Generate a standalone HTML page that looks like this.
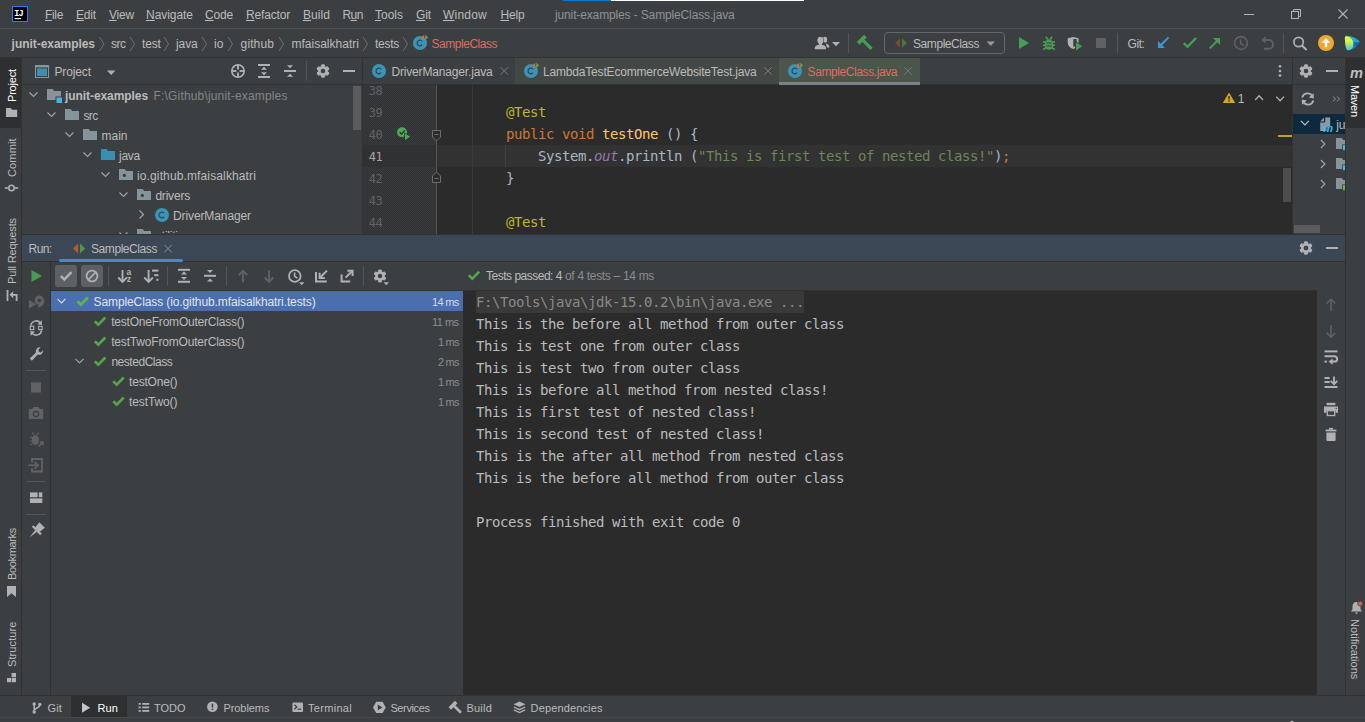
<!DOCTYPE html>
<html lang="en"><head><meta charset="utf-8"><title>junit-examples - SampleClass.java</title>
<style>
html,body{margin:0;padding:0;background:#3c3f41;}
body{width:1365px;height:722px;overflow:hidden;background:#3c3f41;position:relative;font-family:'Liberation Sans', sans-serif;}
#bg div,#ic svg,.t{position:absolute;}
.t{white-space:pre;}
.clip{position:absolute;overflow:hidden;}
.t u{text-decoration:underline;text-underline-offset:1px;text-decoration-thickness:1px;}
svg{overflow:visible;}
</style></head><body>
<div id="bg">
<div style="left:563px;top:0px;width:48px;height:1px;background:#0a78d7;"></div>
<div style="left:611px;top:0px;width:193px;height:1px;background:#ffffff;"></div>
<div style="left:0px;top:28px;width:1365px;height:1px;background:#515151;"></div>
<div style="left:0px;top:57px;width:1365px;height:1px;background:#323232;"></div>
<div style="left:0px;top:58px;width:21px;height:70px;background:#2d2f30;"></div>
<div style="left:21px;top:58px;width:1px;height:638px;background:#323232;"></div>
<div style="left:1345px;top:58px;width:1px;height:638px;background:#323232;"></div>
<div style="left:1346px;top:58px;width:19px;height:70px;background:#2d2f30;"></div>
<div style="left:22px;top:84px;width:340px;height:1px;background:#323232;"></div>
<div style="left:353px;top:86px;width:8px;height:44px;background:#595b5d;"></div>
<div style="left:362px;top:58px;width:1px;height:177px;background:#323232;"></div>
<div style="left:515px;top:58px;width:264px;height:26px;background:#434846;"></div>
<div style="left:779px;top:58px;width:141px;height:26px;background:#4b554b;"></div>
<div style="left:363px;top:84px;width:930px;height:1px;background:#303233;"></div>
<div style="left:779px;top:82px;width:141px;height:3px;background:#7b8086;"></div>
<div style="left:363px;top:85px;width:930px;height:149px;background:#2b2b2b;"></div>
<div style="left:363px;top:85px;width:73px;height:149px;background:#313335;background:repeating-conic-gradient(#2f3133 0 25%,#393b3e 0 50%) 0 0/2px 2px;"></div>
<div style="left:363px;top:145px;width:930px;height:22px;background:#323232;"></div>
<div style="left:363px;top:145px;width:73px;height:22px;background:#2f3133;"></div>
<div style="left:436px;top:85px;width:1px;height:149px;background:#555555;"></div>
<div style="left:472px;top:85px;width:1px;height:149px;background:#393939;"></div>
<div style="left:505px;top:145px;width:1px;height:22px;background:#404040;"></div>
<div style="left:1283px;top:168px;width:8px;height:34px;background:#4d4d4d;"></div>
<div style="left:1278px;top:135px;width:14px;height:2px;background:#c79d2a;"></div>
<div style="left:1292px;top:58px;width:1px;height:177px;background:#323232;"></div>
<div style="left:1293px;top:84px;width:52px;height:1px;background:#323232;"></div>
<div style="left:1293px;top:114px;width:52px;height:20px;background:#0d293e;"></div>
<div style="left:1294px;top:225px;width:26px;height:8px;background:#595b5d;"></div>
<div style="left:22px;top:234px;width:1323px;height:1px;background:#323232;"></div>
<div style="left:22px;top:235px;width:1323px;height:26px;background:#3b4754;"></div>
<div style="left:22px;top:261px;width:1323px;height:1px;background:#323232;"></div>
<div style="left:59px;top:259px;width:124px;height:3px;background:#4a88c7;border-radius:1.5px;"></div>
<div style="left:50px;top:262px;width:1px;height:434px;background:#323232;"></div>
<div style="left:51px;top:290px;width:1266px;height:1px;background:#323232;"></div>
<div style="left:51px;top:291px;width:412px;height:20px;background:#4b6eaf;"></div>
<div style="left:463px;top:291px;width:854px;height:404px;background:#2b2b2b;"></div>
<div style="left:476px;top:291px;width:328px;height:22px;background:#393939;"></div>
<div style="left:55px;top:265px;width:22px;height:22px;background:#5c6164;border-radius:3px;"></div>
<div style="left:81px;top:265px;width:22px;height:22px;background:#5c6164;border-radius:3px;"></div>
<div style="left:0px;top:695px;width:1365px;height:1px;background:#323232;"></div>
<div style="left:71px;top:696px;width:56px;height:21px;background:#2d2f30;"></div>
<div style="left:0px;top:717px;width:1365px;height:1px;background:#45484a;"></div>
</div>
<svg id="ic" width="1365" height="722" viewBox="0 0 1365 722" style="position:absolute;left:0;top:0">
<rect x="12" y="6" width="16" height="16" fill="#000000" />
<rect x="12.5" y="6.5" width="15" height="15" fill="none" stroke="#2a7df4" stroke-width="1"/>
<text x="14.3" y="15.6" font-family="'Liberation Mono', monospace" font-size="8.6" font-weight="bold" fill="#ffffff" letter-spacing="-0.9">IJ</text>
<rect x="14.6" y="18" width="6.4" height="1.2" fill="#ffffff" />
<line x1="1244" y1="14.5" x2="1254" y2="14.5" stroke="#b4b4b4" stroke-width="1" stroke-linecap="butt"/>
<rect x="1291.5" y="11.5" width="7" height="7" fill="none" stroke="#b4b4b4" stroke-width="1"/>
<path d="M1293.5 11.500v-2h7v7h-2" fill="none" stroke="#b4b4b4" stroke-width="1" />
<line x1="1338.5" y1="9.5" x2="1347.5" y2="18.5" stroke="#b4b4b4" stroke-width="1.1" stroke-linecap="butt"/>
<line x1="1347.5" y1="9.5" x2="1338.5" y2="18.5" stroke="#b4b4b4" stroke-width="1.1" stroke-linecap="butt"/>
<polyline points="99.5,37 104.0,44 99.5,51" fill="none" stroke="#6c6e70" stroke-width="1" stroke-linejoin="miter"/>
<polyline points="130,37 134.5,44 130,51" fill="none" stroke="#6c6e70" stroke-width="1" stroke-linejoin="miter"/>
<polyline points="164,37 168.5,44 164,51" fill="none" stroke="#6c6e70" stroke-width="1" stroke-linejoin="miter"/>
<polyline points="202,37 206.5,44 202,51" fill="none" stroke="#6c6e70" stroke-width="1" stroke-linejoin="miter"/>
<polyline points="228,37 232.5,44 228,51" fill="none" stroke="#6c6e70" stroke-width="1" stroke-linejoin="miter"/>
<polyline points="279,37 283.5,44 279,51" fill="none" stroke="#6c6e70" stroke-width="1" stroke-linejoin="miter"/>
<polyline points="363,37 367.5,44 363,51" fill="none" stroke="#6c6e70" stroke-width="1" stroke-linejoin="miter"/>
<polyline points="403,37 407.5,44 403,51" fill="none" stroke="#6c6e70" stroke-width="1" stroke-linejoin="miter"/>
<circle cx="420" cy="43" r="7.1" fill="#3d93b4" />
<path d="M422.1 41.3a2.8 2.8 0 1 0 0 3.4" fill="none" stroke="#2a4a62" stroke-width="1.2" />
<polygon points="421.3,37.4 424.2,34.8 424.2,40" fill="#e8672c" />
<polygon points="425.2,34.8 428.2,37.4 425.2,40" fill="#59a84a" />
<ellipse cx="824.900" cy="39.700" rx="2.300" ry="2.900" fill="#afb1b3"/>
<path d="M826 43.400c2 .500 3.300 1.500 3.300 3.200v.900h-2.600z" fill="#afb1b3" />
<g stroke="#3c3f41" stroke-width="1.200" paint-order="stroke"><ellipse cx="820.400" cy="40.500" rx="2.800" ry="3.400" fill="#afb1b3"/>
<path d="M814.800 49.200v-1.300c0-1.800 1.800-2.700 3.900-3.200h3.400c2.100 .500 3.900 1.400 3.900 3.200v1.300z" fill="#afb1b3" />
</g>
<ellipse cx="820.400" cy="40.500" rx="2.800" ry="3.400" fill="#afb1b3"/>
<rect x="819" y="43" width="2.8" height="2.4" fill="#afb1b3" />
<polygon points="832,42 840,42 836,46.2" fill="#afb1b3" />
<line x1="848.5" y1="33" x2="848.5" y2="53" stroke="#555555" stroke-width="1" stroke-linecap="butt"/>
<g transform="rotate(-45 862 40)"><rect x="856.800" y="37.800" width="10.400" height="3.800" fill="#499c54"/><rect x="860.800" y="41.400" width="3.300" height="11.600" fill="#499c54"/></g>
<rect x="884.5" y="32.5" width="120" height="21" rx="3.5" fill="none" stroke="#646668" stroke-width="1"/>
<polygon points="895,43 900,38.2 900,47.8" fill="#7a4a39" />
<polygon points="902,38.2 907,43 902,47.8" fill="#477548" />
<polygon points="986.6,41.5 995,41.5 990.8,45.8" fill="#9a9da0" />
<polygon points="1019,37 1029,43 1019,49" fill="#499c54" />
<g fill="#499c54">
<path d="M1046 36.800l1.800 2.600M1052 36.800l-1.800 2.600" stroke="#499c54" stroke-width="1.700" fill="none"/>
<rect x="1043" y="41.2" width="12" height="1.7" fill="#499c54" />
<rect x="1043" y="44.4" width="12" height="1.7" fill="#499c54" />
<path d="M1043.200 49.400l2.800-1.600M1054.800 49.400l-2.800-1.600" stroke="#499c54" stroke-width="1.700" fill="none"/>
<ellipse cx="1049" cy="44.500" rx="4.300" ry="5.300"/>
</g>
<rect x="1046.2" y="42.5" width="5.6" height="1" fill="#3c3f41" />
<rect x="1046.2" y="45.5" width="5.6" height="1" fill="#3c3f41" />
<path d="M1067.7 38.2l5.4-1.2 5.4 1.2v4.3c0 3.2-2.3 5.4-5.4 6.6-3.1-1.2-5.4-3.4-5.4-6.6z" fill="#afb1b3" />
<path d="M1073.3 39h3.4v3.5c0 2-1.3 3.7-3.4 4.7z" fill="#3c3f41" />
<polygon points="1075.5,41.5 1083.2,46.3 1075.5,51.2" fill="#499c54" stroke="#3c3f41" stroke-width="1"/>
<rect x="1096" y="38" width="10" height="10" fill="#5f6163" />
<line x1="1117.5" y1="33" x2="1117.5" y2="53" stroke="#555555" stroke-width="1" stroke-linecap="butt"/>
<line x1="1168.6" y1="37.4" x2="1161" y2="45" stroke="#3a97d0" stroke-width="2" stroke-linecap="butt"/>
<polygon points="1158,41 1158,48 1165,48" fill="#3a97d0" />
<polyline points="1183.8,43.2 1187.6,46.8 1196,38" fill="none" stroke="#499c54" stroke-width="2.4" stroke-linejoin="miter"/>
<line x1="1209.8" y1="48.4" x2="1217.4" y2="40.8" stroke="#499c54" stroke-width="2" stroke-linecap="butt"/>
<polygon points="1213,38 1220,38 1220,45" fill="#499c54" />
<circle cx="1241" cy="43" r="6.4" fill="none" stroke="#5f6163" stroke-width="1.6" />
<polyline points="1240.6,39.4 1240.6,43.4 1243.6,45.4" fill="none" stroke="#5f6163" stroke-width="1.5" stroke-linejoin="miter"/>
<polygon points="1261,40 1265.5,36.2 1265.5,43.8" fill="#5f6163" />
<path d="M1265 40h3.6a4.4 4.4 0 0 1 0 8.8h-4.6" fill="none" stroke="#5f6163" stroke-width="1.9" />
<line x1="1283.5" y1="33" x2="1283.5" y2="53" stroke="#555555" stroke-width="1" stroke-linecap="butt"/>
<circle cx="1298.6" cy="42" r="4.7" fill="none" stroke="#afb1b3" stroke-width="1.7" />
<line x1="1302" y1="45.5" x2="1306.6" y2="50" stroke="#afb1b3" stroke-width="2" stroke-linecap="butt"/>
<circle cx="1326" cy="43" r="8" fill="#f0a732" />
<polygon points="1321.6,42.8 1326,38.2 1330.4,42.8" fill="#ffffff" />
<rect x="1324.8" y="42" width="2.4" height="5.2" fill="#ffffff" />
<defs><clipPath id="cs"><path d="M1346.800 35.800c-1.200-.100-1.900.600-1.900 1.700 0 3.600.300 7.200 1.200 10.700.400 1.500 1.300 2.300 2.800 2 4.800-1 8.600-4 10.400-7.600.300-.700.300-1.200-.300-1.800-3.200-3.200-7.600-4.700-12.200-5z"/></clipPath><linearGradient id="csg" x1="0" y1="0" x2="0" y2="1"><stop offset="0" stop-color="#f6f236"/><stop offset=".28" stop-color="#e4ee4c"/><stop offset=".6" stop-color="#8fe07e"/><stop offset="1" stop-color="#2fc0e0"/></linearGradient><linearGradient id="csh" x1="0" y1="0" x2="1" y2="0"><stop offset="0" stop-color="#36cf84"/><stop offset=".5" stop-color="#22b3b4"/><stop offset="1" stop-color="#1593e0"/></linearGradient></defs>
<g clip-path="url(#cs)"><rect x="1344" y="35" width="17" height="17" fill="#1366c6"/><polygon points="1344,35 1361,35 1361,42.200 1352,42.200 1344,44" fill="url(#csh)"/><polygon points="1346,52 1350.500,46.500 1356.500,46 1352,52" fill="#1583de"/><ellipse cx="1346.300" cy="44" rx="7.200" ry="7.400" fill="url(#csg)"/></g>
<rect x="35.5" y="65.5" width="13" height="12" fill="none" stroke="#8a959c" stroke-width="1"/>
<rect x="35" y="65" width="14" height="2.4" fill="#8a959c" />
<rect x="37" y="68.4" width="10" height="7.6" fill="#3e8eaf" />
<polygon points="107,70.5 115.4,70.5 111.2,75" fill="#afb1b3" />
<circle cx="238" cy="71" r="6.2" fill="none" stroke="#afb1b3" stroke-width="1.6" />
<line x1="238" y1="64.7" x2="238" y2="69.4" stroke="#afb1b3" stroke-width="1.9" transform="rotate(0 238 71)"/>
<line x1="238" y1="64.7" x2="238" y2="69.4" stroke="#afb1b3" stroke-width="1.9" transform="rotate(90 238 71)"/>
<line x1="238" y1="64.7" x2="238" y2="69.4" stroke="#afb1b3" stroke-width="1.9" transform="rotate(180 238 71)"/>
<line x1="238" y1="64.7" x2="238" y2="69.4" stroke="#afb1b3" stroke-width="1.9" transform="rotate(270 238 71)"/>
<rect x="258" y="64" width="12" height="2" fill="#afb1b3" />
<rect x="258" y="76" width="12" height="2" fill="#afb1b3" />
<polygon points="264,66.8 267,69.8 261,69.8" fill="#afb1b3" />
<polygon points="261,72.2 267,72.2 264,75.2" fill="#afb1b3" />
<rect x="284" y="70" width="12" height="2" fill="#afb1b3" />
<polygon points="287,65.2 293,65.2 290,68.3" fill="#afb1b3" />
<polygon points="290,73.7 293,76.8 287,76.8" fill="#afb1b3" />
<line x1="306.5" y1="61" x2="306.5" y2="80.5" stroke="#555555" stroke-width="1" stroke-linecap="butt"/>
<path d="M321.34 66.60 L321.69 64.84 L324.31 64.84 L324.66 66.60 L325.98 67.37 L327.68 66.78 L328.99 69.06 L327.64 70.23 L327.64 71.77 L328.99 72.94 L327.68 75.22 L325.98 74.63 L324.66 75.40 L324.31 77.16 L321.69 77.16 L321.34 75.40 L320.02 74.63 L318.32 75.22 L317.01 72.94 L318.36 71.77 L318.36 70.23 L317.01 69.06 L318.32 66.78 L320.02 67.37Z" fill="#afb1b3" stroke="#afb1b3" stroke-width="1" stroke-linejoin="round"/>
<circle cx="323" cy="71" r="2.3" fill="#3c3f41" />
<rect x="343" y="70" width="12" height="2" fill="#afb1b3" />
<polyline points="29.5,92.5 33.5,96.5 37.5,92.5" fill="none" stroke="#a0a3a5" stroke-width="1.2" stroke-linejoin="miter"/>
<path d="M47 89h5.6l1.6 2h6.8v9h-14z" fill="#87939a" />
<polyline points="47.5,112.5 51.5,116.5 55.5,112.5" fill="none" stroke="#a0a3a5" stroke-width="1.2" stroke-linejoin="miter"/>
<path d="M65 109h5.6l1.6 2h6.8v9h-14z" fill="#87939a" />
<polyline points="65.5,132.5 69.5,136.5 73.5,132.5" fill="none" stroke="#a0a3a5" stroke-width="1.2" stroke-linejoin="miter"/>
<path d="M83 129h5.6l1.6 2h6.8v9h-14z" fill="#87939a" />
<polyline points="83.5,152.5 87.5,156.5 91.5,152.5" fill="none" stroke="#a0a3a5" stroke-width="1.2" stroke-linejoin="miter"/>
<path d="M101 149h5.6l1.6 2h6.8v9h-14z" fill="#3a8eb1" />
<polyline points="101.5,172.5 105.5,176.5 109.5,172.5" fill="none" stroke="#a0a3a5" stroke-width="1.2" stroke-linejoin="miter"/>
<path d="M119 169h5.6l1.6 2h6.8v9h-14z" fill="#87939a" />
<circle cx="124.3" cy="175.4" r="1.7" fill="#3c3f41" />
<polyline points="119.5,192.5 123.5,196.5 127.5,192.5" fill="none" stroke="#a0a3a5" stroke-width="1.2" stroke-linejoin="miter"/>
<path d="M137 189h5.6l1.6 2h6.8v9h-14z" fill="#87939a" />
<circle cx="142.3" cy="195.4" r="1.7" fill="#3c3f41" />
<rect x="55.5" y="96.5" width="7" height="7" fill="#3c3f41" />
<rect x="56.5" y="97.5" width="5.5" height="5.5" fill="#40b6e0" />
<polyline points="139.5,210.5 143.5,214.5 139.5,218.5" fill="none" stroke="#a0a3a5" stroke-width="1.2" stroke-linejoin="miter"/>
<circle cx="162" cy="215" r="7" fill="#3d93b4" />
<path d="M164.1 213.3a2.8 2.8 0 1 0 0 3.4" fill="none" stroke="#2a4a62" stroke-width="1.2" />
<g clip-path="url(#cliptree)">
<defs><clipPath id="cliptree"><rect x="22" y="85" width="340" height="149"/></clipPath></defs>
<polyline points="119.5,232.5 123.5,236.5 127.5,232.5" fill="none" stroke="#a0a3a5" stroke-width="1.2" stroke-linejoin="miter"/>
<path d="M137 229h5.6l1.6 2h6.8v9h-14z" fill="#87939a" />
<circle cx="142.3" cy="235.4" r="1.7" fill="#3c3f41" />
</g>
<path d="M6 108h4.6l1.6 1.8h5v7.2h-11.2z" fill="#afb1b3" />
<circle cx="11.5" cy="188" r="2.7" fill="none" stroke="#afb1b3" stroke-width="1.6" />
<rect x="4.8" y="187.2" width="4" height="1.6" fill="#afb1b3" />
<rect x="14.2" y="187.2" width="4" height="1.6" fill="#afb1b3" />
<rect x="6.6" y="290" width="1.8" height="11" fill="#afb1b3" />
<path d="M16.6 301v-6.2h-5.4" fill="none" stroke="#afb1b3" stroke-width="1.8" />
<polygon points="9.4,294.8 13.2,291.3 13.2,298.3" fill="#afb1b3" />
<path d="M7 586h9v11l-4.5-3.8-4.500 3.800z" fill="#afb1b3" />
<rect x="11.6" y="673" width="4.4" height="4.2" fill="#afb1b3" />
<rect x="7" y="678" width="4.2" height="4.2" fill="#afb1b3" />
<rect x="11.8" y="678" width="4.2" height="4.2" fill="#afb1b3" />
<text x="1350" y="78" font-family="'Liberation Sans', sans-serif" font-size="14" font-weight="bold" fill="#bfbfbf" font-style="italic" textLength="13" lengthAdjust="spacingAndGlyphs">m</text>
<path d="M1356.500 602c2.600 0 4 2 4 4.300v3l1.500 2.200h-11l1.500-2.200v-3c0-2.300 1.400-4.300 4-4.300z" fill="#afb1b3" />
<polygon points="1354.8,612.4 1358.2,612.4 1356.5,614.2" fill="#afb1b3" />
<circle cx="1360.2" cy="603.6" r="2.5" fill="#db5c50" stroke="#3c3f41" stroke-width="0.8"/>
<circle cx="379" cy="71" r="7" fill="#3d93b4" />
<path d="M381.1 69.3a2.8 2.8 0 1 0 0 3.4" fill="none" stroke="#2a4a62" stroke-width="1.2" />
<circle cx="531" cy="71" r="7" fill="#3d93b4" />
<path d="M533.1 69.3a2.8 2.8 0 1 0 0 3.4" fill="none" stroke="#2a4a62" stroke-width="1.2" />
<polygon points="532.3,65.4 535.2,62.8 535.2,68" fill="#e8672c" />
<polygon points="536.2,62.8 539.2,65.4 536.2,68" fill="#59a84a" />
<circle cx="795" cy="71" r="7" fill="#3d93b4" />
<path d="M797.1 69.3a2.8 2.8 0 1 0 0 3.4" fill="none" stroke="#2a4a62" stroke-width="1.2" />
<polygon points="796.3,65.4 799.2,62.8 799.2,68" fill="#e8672c" />
<polygon points="800.2,62.8 803.2,65.4 800.2,68" fill="#59a84a" />
<line x1="500.5" y1="67.2" x2="508.0" y2="74.7" stroke="#787a7c" stroke-width="1" stroke-linecap="butt"/>
<line x1="508.0" y1="67.2" x2="500.5" y2="74.7" stroke="#787a7c" stroke-width="1" stroke-linecap="butt"/>
<line x1="764.3" y1="67.2" x2="771.8" y2="74.7" stroke="#787a7c" stroke-width="1" stroke-linecap="butt"/>
<line x1="771.8" y1="67.2" x2="764.3" y2="74.7" stroke="#787a7c" stroke-width="1" stroke-linecap="butt"/>
<line x1="904.3" y1="67.2" x2="911.8" y2="74.7" stroke="#787a7c" stroke-width="1" stroke-linecap="butt"/>
<line x1="911.8" y1="67.2" x2="904.3" y2="74.7" stroke="#787a7c" stroke-width="1" stroke-linecap="butt"/>
<circle cx="1280" cy="66.3" r="1.35" fill="#afb1b3" />
<circle cx="1280" cy="71" r="1.35" fill="#afb1b3" />
<circle cx="1280" cy="75.6" r="1.35" fill="#afb1b3" />
<circle cx="402" cy="132.2" r="5" fill="#4fa758" />
<polyline points="399.6,132.2 401.5,134 404.8,130.4" fill="none" stroke="#313335" stroke-width="1.3" stroke-linejoin="miter"/>
<polygon points="404.2,132.4 411,136.8 404.2,141.2" fill="#313335" />
<polygon points="405,133.6 410.2,136.8 405,140" fill="#4fa758" />
<path d="M432.500 130.500h8v6.500l-4 4-4-4z" fill="#2b2b2b" stroke="#6a6d70" stroke-width="1" />
<line x1="434.3" y1="134.5" x2="438.7" y2="134.5" stroke="#6a6d70" stroke-width="1" stroke-linecap="butt"/>
<path d="M432.500 182.500h8v-6.500l-4-4-4 4z" fill="#2b2b2b" stroke="#6a6d70" stroke-width="1" />
<line x1="434.3" y1="178.5" x2="438.7" y2="178.5" stroke="#6a6d70" stroke-width="1" stroke-linecap="butt"/>
<path d="M1229 92.400l6.200 10.600h-12.400z" fill="#d6a524" />
<rect x="1228.3" y="96" width="1.4" height="3.6" fill="#2b2b2b" />
<rect x="1228.3" y="100.3" width="1.4" height="1.4" fill="#2b2b2b" />
<polyline points="1255.2,100 1259.1,95.8 1263,100" fill="none" stroke="#afb1b3" stroke-width="1.3" stroke-linejoin="miter"/>
<polyline points="1276.2,96.6 1280.1,100.8 1284,96.6" fill="none" stroke="#afb1b3" stroke-width="1.3" stroke-linejoin="miter"/>
<path d="M1304.34 66.60 L1304.69 64.84 L1307.31 64.84 L1307.66 66.60 L1308.98 67.37 L1310.68 66.78 L1311.99 69.06 L1310.64 70.23 L1310.64 71.77 L1311.99 72.94 L1310.68 75.22 L1308.98 74.63 L1307.66 75.40 L1307.31 77.16 L1304.69 77.16 L1304.34 75.40 L1303.02 74.63 L1301.32 75.22 L1300.01 72.94 L1301.36 71.77 L1301.36 70.23 L1300.01 69.06 L1301.32 66.78 L1303.02 67.37Z" fill="#afb1b3" stroke="#afb1b3" stroke-width="1" stroke-linejoin="round"/>
<circle cx="1306" cy="71" r="2.3" fill="#3c3f41" />
<rect x="1326" y="70" width="12" height="2" fill="#afb1b3" />
<path d="M1302.200 97.500a5.700 5.700 0 0 1 10.200-1.600" fill="none" stroke="#afb1b3" stroke-width="1.8" />
<polygon points="1313.6,93.2 1313.8,98.4 1308.8,97.6" fill="#afb1b3" />
<path d="M1313.400 100.500a5.700 5.700 0 0 1-10.200 1.600" fill="none" stroke="#afb1b3" stroke-width="1.8" />
<polygon points="1302,104.8 1301.8,99.6 1306.8,100.4" fill="#afb1b3" />
<polyline points="1332.8,96.4 1335.6,98.8 1332.8,101.2" fill="none" stroke="#8a8d8f" stroke-width="1" stroke-linejoin="miter"/>
<polyline points="1336.8,96.4 1339.6,98.8 1336.8,101.2" fill="none" stroke="#8a8d8f" stroke-width="1" stroke-linejoin="miter"/>
<polyline points="1300.9,120.9 1304.9,124.9 1308.9,120.9" fill="none" stroke="#c0c4c8" stroke-width="1.2" stroke-linejoin="miter"/>
<g clip-path="url(#clipmvn)"><defs><clipPath id="clipmvn"><rect x="1293" y="85" width="52" height="149"/></clipPath></defs>
<path d="M1325.200 117.400h5v9.200h-3.600v4.400h-6.400v-8.400h5z" fill="#8e9aa3" />
<polygon points="1320.2,121.4 1324,117.6 1324,121.4" fill="#8e9aa3" />
<text x="1323.2" y="132" font-family="'Liberation Sans', sans-serif" font-size="11" font-weight="bold" fill="#40b6e0" font-style="italic">m</text>
<polyline points="1320.9,140.0 1324.9,144.0 1320.9,148.0" fill="none" stroke="#a0a3a5" stroke-width="1.2" stroke-linejoin="miter"/>
<path d="M1336 138h5.6l1.6 2h6.8v9h-14z" fill="#87939a" />
<rect x="1342.2" y="144.4" width="4" height="6" fill="#3c3f41" />
<rect x="1343" y="145.2" width="3" height="5" fill="#40b6e0" />
<polyline points="1320.9,160.0 1324.9,164.0 1320.9,168.0" fill="none" stroke="#a0a3a5" stroke-width="1.2" stroke-linejoin="miter"/>
<path d="M1336 158h5.6l1.6 2h6.8v9h-14z" fill="#87939a" />
<rect x="1342.2" y="164.4" width="4" height="6" fill="#3c3f41" />
<rect x="1343" y="165.2" width="3" height="5" fill="#40b6e0" />
<polyline points="1320.9,180.0 1324.9,184.0 1320.9,188.0" fill="none" stroke="#a0a3a5" stroke-width="1.2" stroke-linejoin="miter"/>
<path d="M1336 178h5.6l1.6 2h6.8v9h-14z" fill="#87939a" />
<rect x="1342.2" y="184.4" width="4" height="6" fill="#3c3f41" />
<rect x="1343" y="185.2" width="3" height="5" fill="#62b543" />
</g>
<polygon points="73,248.6 78.2,243.6 78.2,253.6" fill="#b65c30" />
<polygon points="80,243.6 85.2,248.6 80,253.6" fill="#4f9848" />
<line x1="164.3" y1="244.8" x2="171.8" y2="252.3" stroke="#8a9099" stroke-width="1" stroke-linecap="butt"/>
<line x1="171.8" y1="244.8" x2="164.3" y2="252.3" stroke="#8a9099" stroke-width="1" stroke-linecap="butt"/>
<path d="M1304.34 243.60 L1304.69 241.84 L1307.31 241.84 L1307.66 243.60 L1308.98 244.37 L1310.68 243.78 L1311.99 246.06 L1310.64 247.23 L1310.64 248.77 L1311.99 249.94 L1310.68 252.22 L1308.98 251.63 L1307.66 252.40 L1307.31 254.16 L1304.69 254.16 L1304.34 252.40 L1303.02 251.63 L1301.32 252.22 L1300.01 249.94 L1301.36 248.77 L1301.36 247.23 L1300.01 246.06 L1301.32 243.78 L1303.02 244.37Z" fill="#afb1b3" stroke="#afb1b3" stroke-width="1" stroke-linejoin="round"/>
<circle cx="1306" cy="248" r="2.3" fill="#3c3f41" />
<circle cx="1306" cy="248" r="2.3" fill="#3b4754" />
<rect x="1326" y="247" width="12" height="2" fill="#afb1b3" />
<polygon points="31.5,270 42,276 31.5,282" fill="#499c54" />
<polygon points="29,300 36.5,304.3 29,308.6" fill="#606264" />
<circle cx="39.3" cy="300.3" r="3.3" fill="none" stroke="#606264" stroke-width="2.8" />
<path d="M43.2 300.5c0 3-1.600 5-5 5.800" fill="none" stroke="#606264" stroke-width="2.4" />
<path d="M30.800 325.500a5.600 5.600 0 0 1 9.600-2.800" fill="none" stroke="#afb1b3" stroke-width="1.5" />
<polygon points="41.8,320.2 42,325 37.4,324.2" fill="#afb1b3" />
<path d="M41.600 330.500a5.600 5.600 0 0 1-9.600 2.800" fill="none" stroke="#afb1b3" stroke-width="1.5" />
<polygon points="30.6,335.8 30.4,331 35,331.8" fill="#afb1b3" />
<rect x="30.300" y="326.300" width="3.400" height="3.400" fill="none" stroke="#afb1b3" stroke-width="1.100"/><rect x="38.700" y="326.300" width="3.400" height="3.400" fill="none" stroke="#afb1b3" stroke-width="1.100"/>
<path d="M43.300 350.200a4.300 4.300 0 0 1-5.600 4.400l-5.800 6.200-2.200-2.200 6.200-5.800a4.300 4.300 0 0 1 4.800-5.500l-2.400 2.500 .600 2 2 .600z" fill="#afb1b3" />
<line x1="26.5" y1="370.5" x2="45.5" y2="370.5" stroke="#555555" stroke-width="1" stroke-linecap="butt"/>
<rect x="31" y="382.5" width="10" height="10" fill="#606264" />
<path d="M33.500 407l-1.300 2h-2.400a1 1 0 0 0-1 1v8a1 1 0 0 0 1 1h12.400a1 1 0 0 0 1-1v-8a1 1 0 0 0-1-1h-2.400l-1.300-2z" fill="#606264" />
<circle cx="36" cy="414" r="2.6" fill="none" stroke="#3c3f41" stroke-width="1.3" />
<g fill="#606264" stroke="#606264">
<ellipse cx="35.500" cy="440" rx="3.600" ry="4.800" stroke="none"/><path d="M32.200 432.600l2 2.400M38.800 432.600l-2 2.400M30 437.500h3M30 441h3M30.300 445l2.400-1.200" stroke-width="1.200" fill="none"/></g>
<polygon points="38,441 44,441 44,447" fill="#606264" stroke="#3c3f41" stroke-width="0.800"/>
<line x1="43.2" y1="441.8" x2="38.5" y2="446.5" stroke="#606264" stroke-width="1.6" stroke-linecap="butt"/>
<path d="M32 462.400v-3.400h10v12.500h-10v-3.400" fill="none" stroke="#606264" stroke-width="1.8" />
<line x1="28.6" y1="465.2" x2="37.5" y2="465.2" stroke="#606264" stroke-width="1.8" stroke-linecap="butt"/>
<polyline points="34.6,461.8 38,465.2 34.6,468.6" fill="none" stroke="#606264" stroke-width="1.8" stroke-linejoin="miter"/>
<line x1="26.5" y1="481.5" x2="45.5" y2="481.5" stroke="#555555" stroke-width="1" stroke-linecap="butt"/>
<rect x="30" y="492.4" width="7.6" height="4.8" fill="#afb1b3" />
<rect x="38.8" y="492.4" width="3.5" height="4.8" fill="#afb1b3" />
<rect x="30" y="498.4" width="12.3" height="4.6" fill="#afb1b3" />
<line x1="26.5" y1="514.5" x2="45.5" y2="514.5" stroke="#555555" stroke-width="1" stroke-linecap="butt"/>
<g transform="rotate(45 36.5 530.5)" fill="#afb1b3"><path d="M32.600 522.600h7.800l-.800 6.800h-6.200z"/><rect x="30.600" y="529" width="11.800" height="2.200"/><path d="M35.300 531h2.400l-1.200 9.500z"/></g>
<polyline points="60.86,275.988 64.358,279.38 71.46,272.17199999999997" fill="none" stroke="#afb1b3" stroke-width="2.5" stroke-linejoin="miter"/>
<circle cx="92" cy="276" r="5.4" fill="none" stroke="#afb1b3" stroke-width="1.8" />
<line x1="88.2" y1="279.8" x2="95.8" y2="272.2" stroke="#afb1b3" stroke-width="1.8" stroke-linecap="butt"/>
<line x1="108.5" y1="266" x2="108.5" y2="286" stroke="#555555" stroke-width="1" stroke-linecap="butt"/>
<line x1="122.5" y1="270" x2="122.5" y2="281.4" stroke="#afb1b3" stroke-width="1.9" stroke-linecap="butt"/>
<polyline points="118.2,277.5 122.5,281.8 126.8,277.5" fill="none" stroke="#afb1b3" stroke-width="1.9" stroke-linejoin="miter"/>
<text x="126.6" y="274.7" font-family="'Liberation Sans', sans-serif" font-size="8.6" font-weight="bold" fill="#afb1b3" >a</text>
<text x="126.8" y="281.7" font-family="'Liberation Sans', sans-serif" font-size="8.6" font-weight="bold" fill="#afb1b3" >z</text>
<line x1="148.6" y1="270" x2="148.6" y2="281.4" stroke="#afb1b3" stroke-width="1.9" stroke-linecap="butt"/>
<polyline points="144.29999999999998,277.5 148.6,281.8 152.9,277.5" fill="none" stroke="#afb1b3" stroke-width="1.9" stroke-linejoin="miter"/>
<rect x="152" y="269.6" width="6.4" height="2" fill="#afb1b3" />
<rect x="154.2" y="274.2" width="4.2" height="2" fill="#afb1b3" />
<rect x="156.4" y="278.8" width="2" height="2" fill="#afb1b3" />
<line x1="167.5" y1="266" x2="167.5" y2="286" stroke="#555555" stroke-width="1" stroke-linecap="butt"/>
<rect x="178" y="268.8" width="12" height="2" fill="#afb1b3" />
<rect x="178" y="280.8" width="12" height="2" fill="#afb1b3" />
<polygon points="184,271.6 187,274.6 181,274.6" fill="#afb1b3" />
<polygon points="181,277.0 187,277.0 184,280.0" fill="#afb1b3" />
<rect x="204" y="274.8" width="12" height="2" fill="#afb1b3" />
<polygon points="207,270.0 213,270.0 210,273.1" fill="#afb1b3" />
<polygon points="210,278.5 213,281.6 207,281.6" fill="#afb1b3" />
<line x1="226.5" y1="266" x2="226.5" y2="286" stroke="#555555" stroke-width="1" stroke-linecap="butt"/>
<line x1="243" y1="271.3" x2="243" y2="282.2" stroke="#606264" stroke-width="1.9" stroke-linecap="butt"/>
<polyline points="238.7,275.2 243,270.9 247.3,275.2" fill="none" stroke="#606264" stroke-width="1.9" stroke-linejoin="miter"/>
<line x1="269" y1="270.5" x2="269" y2="281.4" stroke="#606264" stroke-width="1.9" stroke-linecap="butt"/>
<polyline points="264.7,277.5 269,281.8 273.3,277.5" fill="none" stroke="#606264" stroke-width="1.9" stroke-linejoin="miter"/>
<circle cx="294.8" cy="276" r="5.8" fill="none" stroke="#afb1b3" stroke-width="1.8" />
<polyline points="294.6,272.6 294.6,276.4 297.4,278.2" fill="none" stroke="#afb1b3" stroke-width="1.6" stroke-linejoin="miter"/>
<polygon points="298,281.4 305.4,281.4 301.7,286" fill="#3c3f41" />
<polygon points="299,282.2 304.4,282.2 301.7,285.2" fill="#afb1b3" />
<path d="M316 272v9.600h10.800" fill="none" stroke="#afb1b3" stroke-width="2" />
<line x1="327" y1="270.6" x2="320.6" y2="277" stroke="#afb1b3" stroke-width="2" stroke-linecap="butt"/>
<path d="M319.600 272.800v5.200h5.200" fill="none" stroke="#afb1b3" stroke-width="2" />
<path d="M341.600 274.500v7.100h8.600" fill="none" stroke="#afb1b3" stroke-width="2" />
<line x1="345.6" y1="277.6" x2="352" y2="271.2" stroke="#afb1b3" stroke-width="2" stroke-linecap="butt"/>
<path d="M347.400 270.800h5.200v5.200" fill="none" stroke="#afb1b3" stroke-width="2" />
<line x1="363.5" y1="266" x2="363.5" y2="286" stroke="#555555" stroke-width="1" stroke-linecap="butt"/>
<path d="M378.41 271.79 L378.73 270.03 L381.27 270.03 L381.59 271.79 L382.85 272.52 L384.53 271.92 L385.80 274.12 L384.44 275.27 L384.44 276.73 L385.80 277.88 L384.53 280.08 L382.85 279.48 L381.59 280.21 L381.27 281.97 L378.73 281.97 L378.41 280.21 L377.15 279.48 L375.47 280.08 L374.20 277.88 L375.56 276.73 L375.56 275.27 L374.20 274.12 L375.47 271.92 L377.15 272.52Z" fill="#afb1b3" stroke="#afb1b3" stroke-width="1" stroke-linejoin="round"/>
<circle cx="380" cy="276" r="2.2" fill="#3c3f41" />
<polygon points="382.6,281.4 390,281.4 386.3,286" fill="#3c3f41" />
<polygon points="383.6,282.2 389,282.2 386.3,285.2" fill="#afb1b3" />
<polyline points="468.84000000000003,275.29200000000003 472.272,278.62 479.24,271.548" fill="none" stroke="#55a546" stroke-width="2.6" stroke-linejoin="miter"/>
<polyline points="57.5,298.9 61.5,302.9 65.5,298.9" fill="none" stroke="#d5dce8" stroke-width="1.2" stroke-linejoin="miter"/>
<polyline points="77.45,301.24 80.915,304.59999999999997 87.95,297.46" fill="none" stroke="#62b543" stroke-width="2.7" stroke-linejoin="miter"/>
<polyline points="94.85,321.24 98.315,324.59999999999997 105.35,317.46" fill="none" stroke="#55a546" stroke-width="2.7" stroke-linejoin="miter"/>
<polyline points="94.85,341.24 98.315,344.59999999999997 105.35,337.46" fill="none" stroke="#55a546" stroke-width="2.7" stroke-linejoin="miter"/>
<polyline points="75.5,358.9 79.5,362.9 83.5,358.9" fill="none" stroke="#a0a3a5" stroke-width="1.2" stroke-linejoin="miter"/>
<polyline points="94.85,361.24 98.315,364.59999999999997 105.35,357.46" fill="none" stroke="#55a546" stroke-width="2.7" stroke-linejoin="miter"/>
<polyline points="113.25,381.24 116.715,384.59999999999997 123.75,377.46" fill="none" stroke="#55a546" stroke-width="2.7" stroke-linejoin="miter"/>
<polyline points="113.25,401.24 116.715,404.59999999999997 123.75,397.46" fill="none" stroke="#55a546" stroke-width="2.7" stroke-linejoin="miter"/>
<line x1="1331" y1="299.6" x2="1331" y2="311.2" stroke="#606264" stroke-width="1.5" stroke-linecap="butt"/>
<polyline points="1326.7,303.5 1331,299.2 1335.3,303.5" fill="none" stroke="#606264" stroke-width="1.5" stroke-linejoin="miter"/>
<line x1="1331" y1="325" x2="1331" y2="336.7" stroke="#606264" stroke-width="1.5" stroke-linecap="butt"/>
<polyline points="1326.7,332.8 1331,337.1 1335.3,332.8" fill="none" stroke="#606264" stroke-width="1.5" stroke-linejoin="miter"/>
<rect x="1324.5" y="350.4" width="13" height="2" fill="#afb1b3" />
<path d="M1324.500 356.200h10a2.700 2.700 0 0 1 0 5.400h-3" fill="none" stroke="#afb1b3" stroke-width="2" />
<polygon points="1328.6,361.6 1332.6,358.4 1332.6,364.8" fill="#afb1b3" />
<rect x="1324.5" y="360.6" width="2.4" height="2" fill="#afb1b3" />
<rect x="1324.5" y="377" width="5.2" height="2" fill="#afb1b3" />
<rect x="1324.5" y="381" width="5.2" height="2" fill="#afb1b3" />
<rect x="1324.5" y="386" width="13" height="2" fill="#afb1b3" />
<line x1="1334" y1="376.4" x2="1334" y2="383.8" stroke="#afb1b3" stroke-width="1.9" stroke-linecap="butt"/>
<polyline points="1330.7,380.90000000000003 1334,384.20000000000005 1337.3,380.90000000000003" fill="none" stroke="#afb1b3" stroke-width="1.9" stroke-linejoin="miter"/>
<rect x="1326.6" y="402.8" width="8.8" height="2.4" fill="#afb1b3" />
<path d="M1324 406.400h14v6.400h-2.400v-2.400h-9.200v2.400h-2.400z" fill="#afb1b3" />
<rect x="1327.300" y="410.700" width="7.400" height="4.800" fill="none" stroke="#afb1b3" stroke-width="1.300"/>
<rect x="1335.6" y="407.8" width="1.2" height="1.2" fill="#3c3f41" />
<rect x="1325.6" y="429.6" width="10.8" height="1.8" fill="#afb1b3" />
<rect x="1329" y="427.9" width="4" height="1.8" fill="#afb1b3" />
<path d="M1326.400 432.400h9.200v7.600a1 1 0 0 1-1 1h-7.200a1 1 0 0 1-1-1z" fill="#afb1b3" />
<circle cx="34.2" cy="704" r="1.7" fill="#afb1b3" />
<circle cx="39.8" cy="704.4" r="1.7" fill="#afb1b3" />
<circle cx="34.2" cy="712" r="1.7" fill="#afb1b3" />
<line x1="34.2" y1="704" x2="34.2" y2="712" stroke="#afb1b3" stroke-width="1.5" stroke-linecap="butt"/>
<path d="M39.800 705c0 3.500-5.600 2.500-5.600 5.500" fill="none" stroke="#afb1b3" stroke-width="1.5" />
<polygon points="82,702.8 90.2,707.8 82,712.8" fill="#c4c4c4" />
<rect x="138.6" y="703.0" width="2.2" height="1.8" fill="#afb1b3" />
<rect x="142.2" y="703.0" width="7" height="1.8" fill="#afb1b3" />
<rect x="138.6" y="706.5" width="2.2" height="1.8" fill="#afb1b3" />
<rect x="142.2" y="706.5" width="7" height="1.8" fill="#afb1b3" />
<rect x="138.6" y="710.0" width="2.2" height="1.8" fill="#afb1b3" />
<rect x="142.2" y="710.0" width="7" height="1.8" fill="#afb1b3" />
<circle cx="212.4" cy="706.8" r="5.3" fill="#afb1b3" />
<rect x="211.7" y="703.6" width="1.5" height="4" fill="#3c3f41" />
<rect x="211.7" y="708.6" width="1.5" height="1.5" fill="#3c3f41" />
<rect x="292.4" y="702.4" width="10.6" height="9.6" fill="#afb1b3" rx="1" />
<polyline points="294.4,704.8 296.8,707 294.4,709.2" fill="none" stroke="#3c3f41" stroke-width="1.2" stroke-linejoin="miter"/>
<rect x="297.6" y="708.6" width="3.6" height="1.2" fill="#3c3f41" />
<polygon points="373,707.4 376.2,701.8 382.6,701.8 385.8,707.4 382.6,713 376.2,713" fill="#afb1b3" />
<polygon points="377.8,704.6 382.4,707.4 377.8,710.2" fill="#3c3f41" />
<g transform="rotate(-45 455.500 707)" fill="#afb1b3"><rect x="450.500" y="702.200" width="9" height="3.600"/><rect x="454" y="705.400" width="2.600" height="9.500"/></g>
<polygon points="519.5,701.4 525.5,704.2 519.5,707 513.5,704.2" fill="#afb1b3" />
<polyline points="513.8,707 519.5,709.7 525.2,707" fill="none" stroke="#afb1b3" stroke-width="1.3" stroke-linejoin="miter"/>
<polyline points="513.8,709.8 519.5,712.5 525.2,709.8" fill="none" stroke="#afb1b3" stroke-width="1.3" stroke-linejoin="miter"/>
<ellipse cx="1292" cy="722" rx="1.6" ry="1.3" fill="#b4b4b4"/>
</svg>
<div id="tx">
<span class="t" style="left:45px;top:7px;font:normal 12px/16px 'Liberation Sans', sans-serif;color:#bbbbbb;letter-spacing:-0.336px;"><u>F</u>ile</span>
<span class="t" style="left:76px;top:7px;font:normal 12px/16px 'Liberation Sans', sans-serif;color:#bbbbbb;letter-spacing:-0.172px;"><u>E</u>dit</span>
<span class="t" style="left:109px;top:7px;font:normal 12px/16px 'Liberation Sans', sans-serif;color:#bbbbbb;letter-spacing:-0.199px;"><u>V</u>iew</span>
<span class="t" style="left:146px;top:7px;font:normal 12px/16px 'Liberation Sans', sans-serif;color:#bbbbbb;letter-spacing:-0.047px;"><u>N</u>avigate</span>
<span class="t" style="left:205px;top:7px;font:normal 12px/16px 'Liberation Sans', sans-serif;color:#bbbbbb;letter-spacing:-0.172px;"><u>C</u>ode</span>
<span class="t" style="left:246px;top:7px;font:normal 12px/16px 'Liberation Sans', sans-serif;color:#bbbbbb;letter-spacing:-0.170px;"><u>R</u>efactor</span>
<span class="t" style="left:303px;top:7px;font:normal 12px/16px 'Liberation Sans', sans-serif;color:#bbbbbb;letter-spacing:0.062px;"><u>B</u>uild</span>
<span class="t" style="left:342.4px;top:7px;font:normal 12px/16px 'Liberation Sans', sans-serif;color:#bbbbbb;letter-spacing:-0.472px;">R<u>u</u>n</span>
<span class="t" style="left:375px;top:7px;font:normal 12px/16px 'Liberation Sans', sans-serif;color:#bbbbbb;letter-spacing:-0.003px;"><u>T</u>ools</span>
<span class="t" style="left:416px;top:7px;font:normal 12px/16px 'Liberation Sans', sans-serif;color:#bbbbbb;letter-spacing:-0.115px;"><u>G</u>it</span>
<span class="t" style="left:443px;top:7px;font:normal 12px/16px 'Liberation Sans', sans-serif;color:#bbbbbb;letter-spacing:0.219px;"><u>W</u>indow</span>
<span class="t" style="left:500.4px;top:7px;font:normal 12px/16px 'Liberation Sans', sans-serif;color:#bbbbbb;letter-spacing:-0.122px;"><u>H</u>elp</span>
<span class="t" style="left:555px;top:7px;font:normal 12px/16px 'Liberation Sans', sans-serif;color:#8f9294;letter-spacing:-0.136px;">junit-examples - SampleClass.java</span>
<span class="t" style="left:11.6px;top:36px;font:bold 12px/16px 'Liberation Sans', sans-serif;color:#bbbbbb;letter-spacing:-0.045px;">junit-examples</span>
<span class="t" style="left:111px;top:36px;font:normal 12px/16px 'Liberation Sans', sans-serif;color:#bbbbbb;letter-spacing:-0.467px;">src</span>
<span class="t" style="left:142px;top:36px;font:normal 12px/16px 'Liberation Sans', sans-serif;color:#bbbbbb;letter-spacing:-0.186px;">test</span>
<span class="t" style="left:176px;top:36px;font:normal 12px/16px 'Liberation Sans', sans-serif;color:#bbbbbb;letter-spacing:-0.104px;">java</span>
<span class="t" style="left:214px;top:36px;font:normal 12px/16px 'Liberation Sans', sans-serif;color:#bbbbbb;letter-spacing:0.028px;">io</span>
<span class="t" style="left:240.6px;top:36px;font:normal 12px/16px 'Liberation Sans', sans-serif;color:#bbbbbb;letter-spacing:0.116px;">github</span>
<span class="t" style="left:291.4px;top:36px;font:normal 12px/16px 'Liberation Sans', sans-serif;color:#bbbbbb;letter-spacing:0.019px;">mfaisalkhatri</span>
<span class="t" style="left:375px;top:36px;font:normal 12px/16px 'Liberation Sans', sans-serif;color:#bbbbbb;letter-spacing:-0.269px;">tests</span>
<span class="t" style="left:431.6px;top:36px;font:normal 12px/16px 'Liberation Sans', sans-serif;color:#dd6e60;letter-spacing:-0.482px;">SampleClass</span>
<span class="t" style="left:913px;top:36px;font:normal 12px/16px 'Liberation Sans', sans-serif;color:#bbbbbb;letter-spacing:-0.428px;">SampleClass</span>
<span class="t" style="left:1127.6px;top:36px;font:normal 12px/16px 'Liberation Sans', sans-serif;color:#bbbbbb;letter-spacing:-0.468px;">Git:</span>
<span class="t" style="left:54.4px;top:64px;font:normal 12px/16px 'Liberation Sans', sans-serif;color:#bbbbbb;letter-spacing:-0.108px;">Project</span>
<span class="t" style="left:65px;top:88px;font:bold 12px/16px 'Liberation Sans', sans-serif;color:#bbbbbb;letter-spacing:-0.074px;">junit-examples</span>
<span class="t" style="left:153.6px;top:88px;font:normal 12px/16px 'Liberation Sans', sans-serif;color:#828587;letter-spacing:0.164px;">F:\Github\junit-examples</span>
<span class="t" style="left:83.4px;top:108px;font:normal 12px/16px 'Liberation Sans', sans-serif;color:#bbbbbb;letter-spacing:-0.600px;">src</span>
<span class="t" style="left:101.6px;top:128px;font:normal 12px/16px 'Liberation Sans', sans-serif;color:#bbbbbb;letter-spacing:-0.054px;">main</span>
<span class="t" style="left:119px;top:148px;font:normal 12px/16px 'Liberation Sans', sans-serif;color:#bbbbbb;letter-spacing:-0.254px;">java</span>
<span class="t" style="left:137px;top:168px;font:normal 12px/16px 'Liberation Sans', sans-serif;color:#bbbbbb;letter-spacing:0.128px;">io.github.mfaisalkhatri</span>
<span class="t" style="left:155.4px;top:188px;font:normal 12px/16px 'Liberation Sans', sans-serif;color:#bbbbbb;letter-spacing:-0.202px;">drivers</span>
<span class="t" style="left:173px;top:208px;font:normal 12px/16px 'Liberation Sans', sans-serif;color:#bbbbbb;letter-spacing:-0.105px;">DriverManager</span>
<div class="clip" style="left:150px;top:222px;width:100px;height:11.4px"><span class="t" style="left:5.400000000000006px;top:6px;font:normal 12px/16px 'Liberation Sans', sans-serif;color:#bbbbbb;letter-spacing:-0.232px;">utilities</span></div>
<span class="t" style="left:391.4px;top:64px;font:normal 12px/16px 'Liberation Sans', sans-serif;color:#bbbbbb;letter-spacing:-0.158px;">DriverManager.java</span>
<span class="t" style="left:543px;top:64px;font:normal 12px/16px 'Liberation Sans', sans-serif;color:#bbbbbb;letter-spacing:-0.179px;">LambdaTestEcommerceWebsiteTest.java</span>
<span class="t" style="left:807.6px;top:64px;font:normal 12px/16px 'Liberation Sans', sans-serif;color:#dd6e60;letter-spacing:-0.415px;">SampleClass.java</span>
<span class="t" style="left:1237.8px;top:91px;font:normal 12px/16px 'Liberation Sans', sans-serif;color:#bbbbbb;letter-spacing:0.000px;">1</span>
<div class="clip" style="left:1330px;top:114px;width:15px;height:20px"><span class="t" style="left:6.2999999999999545px;top:3px;font:normal 12px/16px 'Liberation Sans', sans-serif;color:#bbbbbb;letter-spacing:-0.172px;">ju</span></div>
<span class="t" style="left:28.6px;top:241px;font:normal 12px/16px 'Liberation Sans', sans-serif;color:#bbbbbb;letter-spacing:-0.590px;">Run:</span>
<span class="t" style="left:91px;top:241px;font:normal 12px/16px 'Liberation Sans', sans-serif;color:#bbbbbb;letter-spacing:-0.428px;">SampleClass</span>
<span class="t" style="left:486px;top:268px;font:normal 12px/16px 'Liberation Sans', sans-serif;color:#bbbbbb;letter-spacing:-0.493px;">Tests passed: 4</span>
<span class="t" style="left:562px;top:268px;font:normal 12px/16px 'Liberation Sans', sans-serif;color:#8c8c8c;letter-spacing:-0.318px;"> of 4 tests – 14 ms</span>
<span class="t" style="left:93.6px;top:294px;font:normal 12px/16px 'Liberation Sans', sans-serif;color:#e2e5ec;letter-spacing:-0.111px;">SampleClass (io.github.mfaisalkhatri.tests)</span>
<span class="t" style="left:111.2px;top:314px;font:normal 12px/16px 'Liberation Sans', sans-serif;color:#bbbbbb;letter-spacing:-0.210px;">testOneFromOuterClass()</span>
<span class="t" style="left:111.2px;top:334px;font:normal 12px/16px 'Liberation Sans', sans-serif;color:#bbbbbb;letter-spacing:-0.181px;">testTwoFromOuterClass()</span>
<span class="t" style="left:111.4px;top:354px;font:normal 12px/16px 'Liberation Sans', sans-serif;color:#bbbbbb;letter-spacing:-0.459px;">nestedClass</span>
<span class="t" style="left:129px;top:374px;font:normal 12px/16px 'Liberation Sans', sans-serif;color:#bbbbbb;letter-spacing:-0.180px;">testOne()</span>
<span class="t" style="left:129px;top:394px;font:normal 12px/16px 'Liberation Sans', sans-serif;color:#bbbbbb;letter-spacing:-0.105px;">testTwo()</span>
<span class="t" style="left:432px;top:295px;font:normal 11px/14px 'Liberation Sans', sans-serif;color:#d5dbe6;letter-spacing:-0.674px;">14 ms</span>
<span class="t" style="left:432px;top:315px;font:normal 11px/14px 'Liberation Sans', sans-serif;color:#8c8c8c;letter-spacing:-0.508px;">11 ms</span>
<span class="t" style="left:438px;top:335px;font:normal 11px/14px 'Liberation Sans', sans-serif;color:#8c8c8c;letter-spacing:-0.811px;">1 ms</span>
<span class="t" style="left:438px;top:355px;font:normal 11px/14px 'Liberation Sans', sans-serif;color:#8c8c8c;letter-spacing:-0.811px;">2 ms</span>
<span class="t" style="left:438px;top:375px;font:normal 11px/14px 'Liberation Sans', sans-serif;color:#8c8c8c;letter-spacing:-0.811px;">1 ms</span>
<span class="t" style="left:438px;top:395px;font:normal 11px/14px 'Liberation Sans', sans-serif;color:#8c8c8c;letter-spacing:-0.811px;">1 ms</span>
<span class="t" style="left:47.4px;top:701px;font:normal 11px/14px 'Liberation Sans', sans-serif;color:#bbbbbb;letter-spacing:0.179px;">Git</span>
<span class="t" style="left:97.4px;top:701px;font:normal 11px/14px 'Liberation Sans', sans-serif;color:#ffffff;letter-spacing:0.137px;">Run</span>
<span class="t" style="left:154px;top:701px;font:normal 11px/14px 'Liberation Sans', sans-serif;color:#bbbbbb;letter-spacing:0.005px;">TODO</span>
<span class="t" style="left:223.4px;top:701px;font:normal 11px/14px 'Liberation Sans', sans-serif;color:#bbbbbb;letter-spacing:-0.059px;">Problems</span>
<span class="t" style="left:308px;top:701px;font:normal 11px/14px 'Liberation Sans', sans-serif;color:#bbbbbb;letter-spacing:0.303px;">Terminal</span>
<span class="t" style="left:390.4px;top:701px;font:normal 11px/14px 'Liberation Sans', sans-serif;color:#bbbbbb;letter-spacing:-0.373px;">Services</span>
<span class="t" style="left:466.4px;top:701px;font:normal 11px/14px 'Liberation Sans', sans-serif;color:#bbbbbb;letter-spacing:0.226px;">Build</span>
<span class="t" style="left:530.6px;top:701px;font:normal 11px/14px 'Liberation Sans', sans-serif;color:#bbbbbb;letter-spacing:0.138px;">Dependencies</span>
<span class="t" style="left:476px;top:293px;font:normal 14px/18px 'DejaVu Sans Mono', 'Liberation Mono', monospace;color:#8a8a8a;letter-spacing:-0.429px;">F:\Tools\java\jdk-15.0.2\bin\java.exe ...</span>
<span class="t" style="left:476px;top:315px;font:normal 14px/18px 'DejaVu Sans Mono', 'Liberation Mono', monospace;color:#bbbbbb;letter-spacing:-0.429px;">This is the before all method from outer class</span>
<span class="t" style="left:476px;top:337px;font:normal 14px/18px 'DejaVu Sans Mono', 'Liberation Mono', monospace;color:#bbbbbb;letter-spacing:-0.429px;">This is test one from outer class</span>
<span class="t" style="left:476px;top:359px;font:normal 14px/18px 'DejaVu Sans Mono', 'Liberation Mono', monospace;color:#bbbbbb;letter-spacing:-0.429px;">This is test two from outer class</span>
<span class="t" style="left:476px;top:381px;font:normal 14px/18px 'DejaVu Sans Mono', 'Liberation Mono', monospace;color:#bbbbbb;letter-spacing:-0.429px;">This is before all method from nested class!</span>
<span class="t" style="left:476px;top:403px;font:normal 14px/18px 'DejaVu Sans Mono', 'Liberation Mono', monospace;color:#bbbbbb;letter-spacing:-0.429px;">This is first test of nested class!</span>
<span class="t" style="left:476px;top:425px;font:normal 14px/18px 'DejaVu Sans Mono', 'Liberation Mono', monospace;color:#bbbbbb;letter-spacing:-0.429px;">This is second test of nested class!</span>
<span class="t" style="left:476px;top:447px;font:normal 14px/18px 'DejaVu Sans Mono', 'Liberation Mono', monospace;color:#bbbbbb;letter-spacing:-0.429px;">This is the after all method from nested class</span>
<span class="t" style="left:476px;top:469px;font:normal 14px/18px 'DejaVu Sans Mono', 'Liberation Mono', monospace;color:#bbbbbb;letter-spacing:-0.429px;">This is the before all method from outer class</span>
<span class="t" style="left:476px;top:513px;font:normal 14px/18px 'DejaVu Sans Mono', 'Liberation Mono', monospace;color:#bbbbbb;letter-spacing:-0.429px;">Process finished with exit code 0</span>
<span class="t" style="left:368.8px;top:83px;font:normal 12px/16px 'DejaVu Sans Mono', 'Liberation Mono', monospace;color:#606366;letter-spacing:-0.527px;">38</span>
<span class="t" style="left:368.8px;top:105px;font:normal 12px/16px 'DejaVu Sans Mono', 'Liberation Mono', monospace;color:#606366;letter-spacing:-0.527px;">39</span>
<span class="t" style="left:368.8px;top:127px;font:normal 12px/16px 'DejaVu Sans Mono', 'Liberation Mono', monospace;color:#606366;letter-spacing:-0.527px;">40</span>
<span class="t" style="left:368.8px;top:149px;font:normal 12px/16px 'DejaVu Sans Mono', 'Liberation Mono', monospace;color:#a4a3a3;letter-spacing:-0.527px;">41</span>
<span class="t" style="left:368.8px;top:171px;font:normal 12px/16px 'DejaVu Sans Mono', 'Liberation Mono', monospace;color:#606366;letter-spacing:-0.527px;">42</span>
<span class="t" style="left:368.8px;top:193px;font:normal 12px/16px 'DejaVu Sans Mono', 'Liberation Mono', monospace;color:#606366;letter-spacing:-0.527px;">43</span>
<span class="t" style="left:368.8px;top:215px;font:normal 12px/16px 'DejaVu Sans Mono', 'Liberation Mono', monospace;color:#606366;letter-spacing:-0.527px;">44</span>
<span class="t" style="left:506px;top:103px;font:normal 14px/18px 'DejaVu Sans Mono', 'Liberation Mono', monospace;color:#bbb529;letter-spacing:-0.431px;">@Test</span>
<span class="t" style="left:506px;top:125px;font:normal 14px/18px 'DejaVu Sans Mono', 'Liberation Mono', monospace;color:#cc7832;letter-spacing:-0.430px;">public void </span>
<span class="t" style="left:602px;top:125px;font:normal 14px/18px 'DejaVu Sans Mono', 'Liberation Mono', monospace;color:#ffc66d;letter-spacing:-0.431px;">testOne</span>
<span class="t" style="left:658px;top:125px;font:normal 14px/18px 'DejaVu Sans Mono', 'Liberation Mono', monospace;color:#a9b7c6;letter-spacing:-0.431px;"> () {</span>
<span class="t" style="left:538px;top:147px;font:normal 14px/18px 'DejaVu Sans Mono', 'Liberation Mono', monospace;color:#a9b7c6;letter-spacing:-0.431px;">System.</span>
<span class="t" style="left:594px;top:147px;font:italic normal 14px/18px 'DejaVu Sans Mono', 'Liberation Mono', monospace;color:#9876aa;letter-spacing:-0.432px;">out</span>
<span class="t" style="left:618px;top:147px;font:normal 14px/18px 'DejaVu Sans Mono', 'Liberation Mono', monospace;color:#a9b7c6;letter-spacing:-0.430px;">.println (</span>
<span class="t" style="left:698px;top:147px;font:normal 14px/18px 'DejaVu Sans Mono', 'Liberation Mono', monospace;color:#6a8759;letter-spacing:-0.429px;">&quot;This is first test of nested class!&quot;</span>
<span class="t" style="left:994px;top:147px;font:normal 14px/18px 'DejaVu Sans Mono', 'Liberation Mono', monospace;color:#a9b7c6;letter-spacing:-0.438px;">)</span>
<span class="t" style="left:1002px;top:147px;font:normal 14px/18px 'DejaVu Sans Mono', 'Liberation Mono', monospace;color:#cc7832;letter-spacing:-0.438px;">;</span>
<span class="t" style="left:506px;top:169px;font:normal 14px/18px 'DejaVu Sans Mono', 'Liberation Mono', monospace;color:#a9b7c6;letter-spacing:-0.438px;">}</span>
<span class="t" style="left:506px;top:213px;font:normal 14px/18px 'DejaVu Sans Mono', 'Liberation Mono', monospace;color:#bbb529;letter-spacing:-0.431px;">@Test</span>
<span class="t" style="left:5px;top:101.6px;font:normal 11px/14px 'Liberation Sans', sans-serif;color:#ffffff;letter-spacing:-0.193px;transform-origin:0 0;transform:rotate(-90deg);">Project</span>
<span class="t" style="left:5px;top:177.2px;font:normal 11px/14px 'Liberation Sans', sans-serif;color:#bbbbbb;letter-spacing:0.152px;transform-origin:0 0;transform:rotate(-90deg);">Commit</span>
<span class="t" style="left:5px;top:284.2px;font:normal 11px/14px 'Liberation Sans', sans-serif;color:#bbbbbb;letter-spacing:-0.152px;transform-origin:0 0;transform:rotate(-90deg);">Pull Requests</span>
<span class="t" style="left:5px;top:580.2px;font:normal 11px/14px 'Liberation Sans', sans-serif;color:#bbbbbb;letter-spacing:-0.359px;transform-origin:0 0;transform:rotate(-90deg);">Bookmarks</span>
<span class="t" style="left:5px;top:667px;font:normal 11px/14px 'Liberation Sans', sans-serif;color:#bbbbbb;letter-spacing:0.095px;transform-origin:0 0;transform:rotate(-90deg);">Structure</span>
<span class="t" style="left:1362px;top:85.4px;font:normal 11px/14px 'Liberation Sans', sans-serif;color:#ffffff;letter-spacing:-0.226px;transform-origin:0 0;transform:rotate(90deg);">Maven</span>
<span class="t" style="left:1362px;top:618.6px;font:normal 11px/14px 'Liberation Sans', sans-serif;color:#bbbbbb;letter-spacing:0.037px;transform-origin:0 0;transform:rotate(90deg);">Notifications</span>
</div>
</body></html>
